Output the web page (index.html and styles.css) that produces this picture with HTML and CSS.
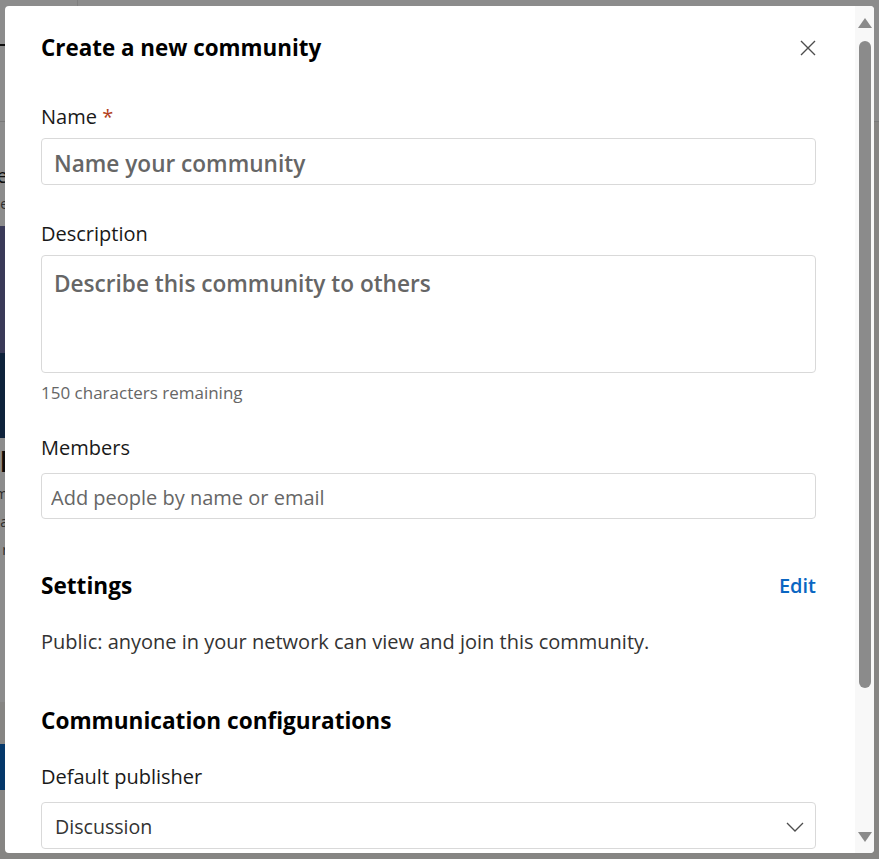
FILE: index.html
```html
<!DOCTYPE html>
<html lang="en">
<head>
    <meta charset="UTF-8">
    <meta name="viewport" content="width=device-width, initial-scale=1.0">
    <title>Create a new community</title>
<link rel="stylesheet" href="styles.css">
</head>
<body>
    <div class="page">
        <header class="topnav">
            <div class="nav-home"><span class="nav-mark"></span><span class="nav-sub">c</span></div>
            <div class="nav-rest"></div>
        </header>
        <main class="feed">
            <aside class="side-card">
                <p class="side-line">e</p>
                <p class="side-line small">e</p>
                <div class="side-img"></div>
                <div class="side-band"></div>
                <p class="side-name">Il</p>
                <p class="side-line small">m</p>
                <p class="side-line small">a</p>
                <p class="side-line small">r</p>
            </aside>
            <div class="side-btn"></div>
        </main>
    </div>

    <div class="backdrop">
        <section class="modal" role="dialog" aria-labelledby="dlg-title">
            <div class="modal-body">
                <div class="modal-head">
                    <h2 id="dlg-title">Create a new community</h2>
                    <button class="close" aria-label="Dismiss">
                        <svg width="16" height="16" viewBox="0 0 16 16"><path d="M1 1 15 15M15 1 1 15" fill="none" stroke="#4d4d4d" stroke-width="1.4"/></svg>
                    </button>
                </div>

                <div class="field">
                    <label for="name">Name <span class="req">*</span></label>
                    <input id="name" class="input input-lg" placeholder="Name your community">
                </div>

                <div class="field">
                    <label for="desc">Description</label>
                    <textarea id="desc" class="input input-lg area" placeholder="Describe this community to others"></textarea>
                    <p class="hint">150 characters remaining</p>
                </div>

                <div class="field field-roomy after-hint">
                    <label for="members">Members</label>
                    <input id="members" class="input" placeholder="Add people by name or email">
                </div>

                <div class="section-head">
                    <h3>Settings</h3>
                    <a href="javascript:void(0)" class="edit">Edit</a>
                </div>
                <p class="summary">Public: anyone in your network can view and join this community.</p>

                <h3 class="section-title">Communication configurations</h3>
                <div class="field field-roomy after-title">
                    <label>Default publisher</label>
                    <div class="select">
                        <span>Discussion</span>
                        <svg width="18" height="10" viewBox="0 0 18 10"><path d="M1 1 9 9 17 1" fill="none" stroke="#4d4d4d" stroke-width="1.3"/></svg>
                    </div>
                </div>
            </div>

            <div class="scrollbar">
                <span class="arrow up"></span>
                <span class="thumb"></span>
                <span class="arrow down"></span>
            </div>
        </section>
    </div>
</body>
</html>
```

FILE: styles.css
```css
    * {
        box-sizing: border-box;
    }
    html, body {
        margin: 0;
        height: 100%;
    }
    body {
        font-family: "Open Sans", "Noto Sans", sans-serif;
        font-size: 20px;
        line-height: 28px;
        color: #191919;
        background-color: #f4f2ee;
        overflow: hidden;
    }

    /* page behind the dialog */
    .topnav {
        display: flex;
        height: 122px;
        background-color: #fff;
        border-bottom: 1px solid #ddd;
    }
    .nav-home {
        width: 78px;
        border-right: 1px solid #e8e8e8;
        padding-top: 44px;
    }
    .nav-mark {
        display: block;
        width: 14px;
        height: 2px;
        margin-left: -6px;
        background-color: #191919;
    }
    .nav-sub {
        display: block;
        margin: 10px 0 0 -8px;
        font-size: 14px;
        color: #666;
    }
    .nav-rest {
        flex: 1;
    }
    .feed {
        display: flex;
        flex-direction: column;
    }
    .side-card {
        width: 70px;
        margin-left: -62px;
        height: 580px;
        padding-top: 40px;
        background-color: #fff;
    }
    .side-line {
        margin: 0;
        font-size: 20px;
        color: #191919;
        text-align: right;
    }
    .side-line.small {
        font-size: 14px;
        color: #555;
    }
    .side-img {
        height: 127px;
        margin-top: 8px;
        background-color: #6b6aa0;
    }
    .side-band {
        height: 85px;
        background-color: #1b3f6c;
    }
    .side-name {
        margin: 10px 0 4px;
        font-size: 26px;
        font-weight: 700;
        text-align: right;
    }
    .side-btn {
        width: 70px;
        height: 46px;
        margin: 42px 0 0 -62px;
        background-color: #0a66c2;
    }

    /* dialog */
    .backdrop {
        position: fixed;
        inset: 0;
        padding: 6px 5px 6px 5px;
        background-color: rgba(0, 0, 0, 0.45);
    }
    .modal {
        display: flex;
        height: 100%;
        background-color: #fff;
        border-radius: 4px;
        overflow: hidden;
    }
    .modal-body {
        flex: 1;
        padding: 27px 39px 0 36px;
        overflow: hidden;
    }
    .modal-head {
        display: flex;
        justify-content: space-between;
        align-items: center;
        margin-bottom: 40px;
    }
    h2 {
        margin: 0;
        font-size: 22.4px;
        line-height: 30px;
        font-weight: 700;
        color: #000;
    }
    .close {
        display: flex;
        padding: 0;
        border: none;
        background: none;
        cursor: pointer;
    }
    .field {
        margin-top: 35px;
    }
    .modal-head + .field {
        margin-top: 0;
    }
    .field.after-hint {
        margin-top: 29px;
    }
    .field.after-title {
        margin-top: 27px;
    }
    label {
        display: block;
        margin-bottom: 7px;
    }
    .field-roomy label {
        margin-bottom: 11px;
    }
    .req {
        color: #b24020;
    }
    .input {
        display: block;
        width: 100%;
        height: 46px;
        margin: 0;
        padding: 3px 9px 0;
        border: 1px solid #d9d9d9;
        border-radius: 4px;
        font-family: inherit;
        font-size: 20px;
        color: #191919;
        background-color: #fff;
    }
    .input::placeholder {
        color: #666;
    }
    .input-lg {
        height: 47px;
        padding: 4px 12px 0;
        font-size: 22.6px;
        font-weight: 600;
    }
    .area {
        height: 118px;
        padding-top: 13px;
        line-height: 30px;
        resize: none;
    }
    .hint {
        margin: 8px 0 0;
        font-size: 17px;
        line-height: 24px;
        color: #666;
    }
    .section-head {
        display: flex;
        justify-content: space-between;
        align-items: center;
        margin-top: 52px;
    }
    h3 {
        margin: 0;
        font-size: 22.6px;
        line-height: 30px;
        font-weight: 700;
        color: #000;
    }
    .edit {
        color: #0a66c2;
        font-weight: 600;
        text-decoration: none;
    }
    .summary {
        margin: 27px 0 0;
        color: #333;
    }
    .section-title {
        margin-top: 50px;
    }
    .select {
        display: flex;
        justify-content: space-between;
        align-items: center;
        height: 47px;
        padding: 2px 11px 0 13px;
        border: 1px solid #d9d9d9;
        border-radius: 4px;
        font-size: 19.6px;
        color: #333;
    }

    /* scrollbar drawn the way the screenshot has it */
    .scrollbar {
        display: flex;
        flex-direction: column;
        align-items: center;
        width: 19px;
        padding: 12px 0 11px;
        background-color: #f8f8f8;
    }
    .arrow {
        width: 0;
        height: 0;
        border-left: 7.5px solid transparent;
        border-right: 7.5px solid transparent;
    }
    .arrow.up {
        border-bottom: 10px solid #8b8b8b;
    }
    .arrow.down {
        margin-top: auto;
        border-top: 10px solid #8b8b8b;
    }
    .thumb {
        width: 12px;
        height: 647px;
        margin-top: 13px;
        border-radius: 6px;
        background-color: #8b8b8b;
    }
```
